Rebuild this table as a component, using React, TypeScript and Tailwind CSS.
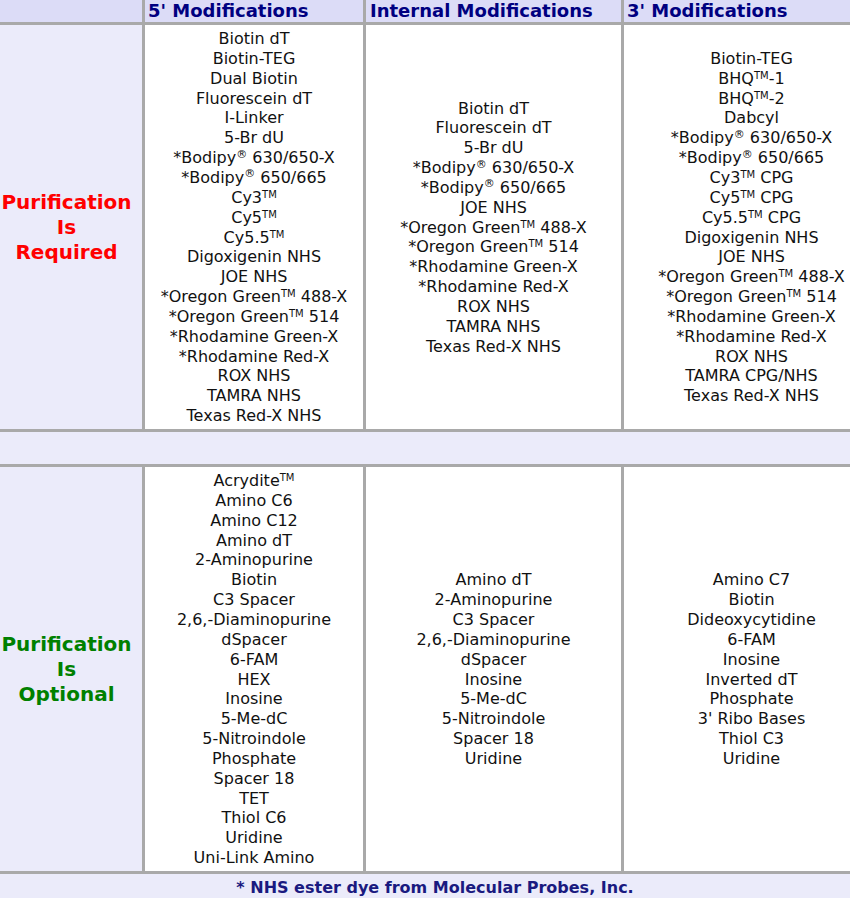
import React from 'react';

// Items use "^TM" / "^R" markers for the superscripts
const fivePrimeRequired = [
  'Biotin dT',
  'Biotin-TEG',
  'Dual Biotin',
  'Fluorescein dT',
  'I-Linker',
  '5-Br dU',
  '*Bodipy^R 630/650-X',
  '*Bodipy^R 650/665',
  'Cy3^TM',
  'Cy5^TM',
  'Cy5.5^TM',
  'Digoxigenin NHS',
  'JOE NHS',
  '*Oregon Green^TM 488-X',
  '*Oregon Green^TM 514',
  '*Rhodamine Green-X',
  '*Rhodamine Red-X',
  'ROX NHS',
  'TAMRA NHS',
  'Texas Red-X NHS',
];

const internalRequired = [
  'Biotin dT',
  'Fluorescein dT',
  '5-Br dU',
  '*Bodipy^R 630/650-X',
  '*Bodipy^R 650/665',
  'JOE NHS',
  '*Oregon Green^TM 488-X',
  '*Oregon Green^TM 514',
  '*Rhodamine Green-X',
  '*Rhodamine Red-X',
  'ROX NHS',
  'TAMRA NHS',
  'Texas Red-X NHS',
];

const threePrimeRequired = [
  'Biotin-TEG',
  'BHQ^TM-1',
  'BHQ^TM-2',
  'Dabcyl',
  '*Bodipy^R 630/650-X',
  '*Bodipy^R 650/665',
  'Cy3^TM CPG',
  'Cy5^TM CPG',
  'Cy5.5^TM CPG',
  'Digoxigenin NHS',
  'JOE NHS',
  '*Oregon Green^TM 488-X',
  '*Oregon Green^TM 514',
  '*Rhodamine Green-X',
  '*Rhodamine Red-X',
  'ROX NHS',
  'TAMRA CPG/NHS',
  'Texas Red-X NHS',
];

const fivePrimeOptional = [
  'Acrydite^TM',
  'Amino C6',
  'Amino C12',
  'Amino dT',
  '2-Aminopurine',
  'Biotin',
  'C3 Spacer',
  '2,6,-Diaminopurine',
  'dSpacer',
  '6-FAM',
  'HEX',
  'Inosine',
  '5-Me-dC',
  '5-Nitroindole',
  'Phosphate',
  'Spacer 18',
  'TET',
  'Thiol C6',
  'Uridine',
  'Uni-Link Amino',
];

const internalOptional = [
  'Amino dT',
  '2-Aminopurine',
  'C3 Spacer',
  '2,6,-Diaminopurine',
  'dSpacer',
  'Inosine',
  '5-Me-dC',
  '5-Nitroindole',
  'Spacer 18',
  'Uridine',
];

const threePrimeOptional = [
  'Amino C7',
  'Biotin',
  'Dideoxycytidine',
  '6-FAM',
  'Inosine',
  'Inverted dT',
  'Phosphate',
  "3' Ribo Bases",
  'Thiol C3',
  'Uridine',
];

function Item({ text }: { text: string }) {
  const parts = text.split(/(\^TM|\^R)/);
  return (
    <div>
      {parts.map((p, i) =>
        p === '^TM' ? (
          <sup key={i} className="text-[10px]">TM</sup>
        ) : p === '^R' ? (
          <sup key={i} className="text-[11px]">®</sup>
        ) : (
          <span key={i}>{p}</span>
        )
      )}
    </div>
  );
}

function ListCell({ items }: { items: string[] }) {
  return (
    <div className="bg-white flex flex-col justify-center items-center text-center pt-[4px] pb-[3px] text-[16px] leading-[19.84px] text-[#111] whitespace-nowrap">
      {items.map((t) => (
        <Item key={t} text={t} />
      ))}
    </div>
  );
}

function LabelCell({ color, lines }: { color: string; lines: string[] }) {
  return (
    <div
      className={`bg-[#ebebfa] flex flex-col justify-center items-center text-center font-bold text-[20px] leading-[25px] ${color}`}
    >
      {lines.map((l) => (
        <div key={l}>{l}</div>
      ))}
    </div>
  );
}

export default function App() {
  return (
    <div
      className="w-[850px] h-[898px] overflow-hidden bg-white"
      style={{ fontFamily: '"DejaVu Sans", Verdana, sans-serif' }}
    >
      <div className="-ml-[9px] w-[888px] grid grid-cols-[151px_218px_255px_255px] grid-rows-[22px_404px_32px_404px_auto] gap-[3px] bg-[#a9a9a9]">
        {/* Header row */}
        <div className="bg-[#dcdcf7]" />
        <div className="bg-[#dcdcf7] pl-[3px] text-[18px] leading-[21px] font-bold text-[#000080] whitespace-nowrap">
          5' Modifications
        </div>
        <div className="bg-[#dcdcf7] pl-[4px] text-[18px] leading-[21px] font-bold text-[#000080] whitespace-nowrap">
          Internal Modifications
        </div>
        <div className="bg-[#dcdcf7] pl-[3px] text-[18px] leading-[21px] font-bold text-[#000080] whitespace-nowrap">
          3' Modifications
        </div>

        {/* Purification required */}
        <LabelCell color="text-[#ff0000]" lines={['Purification', 'Is', 'Required']} />
        <ListCell items={fivePrimeRequired} />
        <ListCell items={internalRequired} />
        <ListCell items={threePrimeRequired} />

        {/* Spacer row */}
        <div className="col-span-4 bg-[#ebebfa]" />

        {/* Purification optional */}
        <LabelCell color="text-[#008000]" lines={['Purification', 'Is', 'Optional']} />
        <ListCell items={fivePrimeOptional} />
        <ListCell items={internalOptional} />
        <ListCell items={threePrimeOptional} />

        {/* Footer */}
        <div className="col-span-4 bg-[#ebebfa] text-center pt-[4px] pb-[6px] text-[16px] leading-[19.84px] font-bold text-[#1a1a80]">
          * NHS ester dye from Molecular Probes, Inc.
        </div>
      </div>
    </div>
  );
}
